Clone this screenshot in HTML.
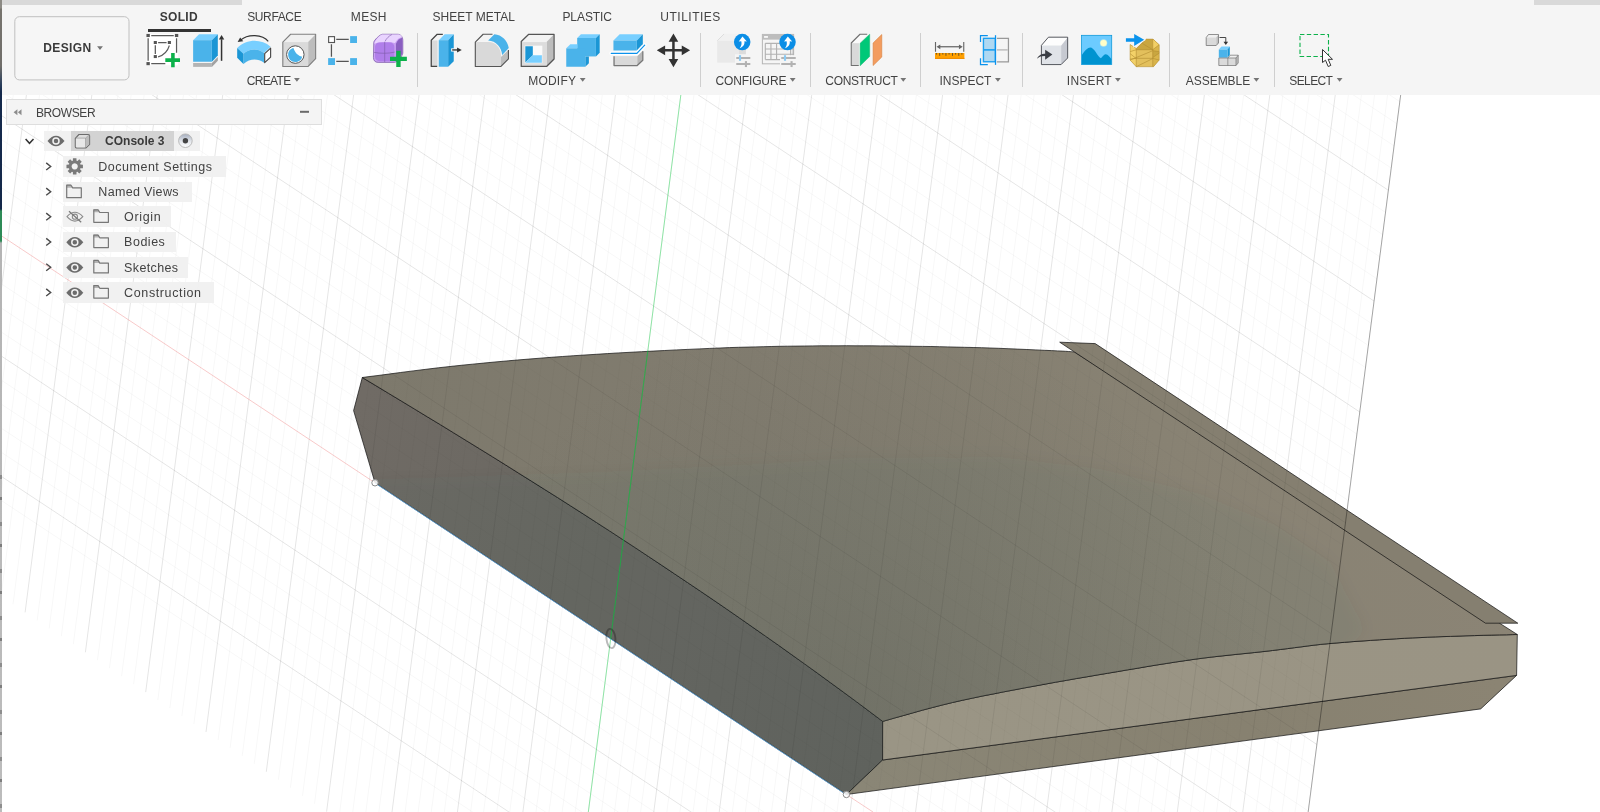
<!DOCTYPE html>
<html lang="en"><head><meta charset="utf-8"><title>Fusion - COnsole 3</title>
<style>
html,body{margin:0;padding:0}
body{width:1600px;height:812px;overflow:hidden;background:#fff;position:relative;font-family:"Liberation Sans",sans-serif;color:#3a3a3a}
.abs{position:absolute}
#labels{position:absolute;left:0;top:0;width:1600px;height:320px;will-change:transform;pointer-events:none}
.t{position:absolute;white-space:pre;color:#424242}
.t.b{font-weight:700;color:#3a3a3a}
#toolbar{position:absolute;left:2px;top:0;width:1598px;height:95px;background:#f5f5f5}
.sep{position:absolute;top:33px;width:1px;height:54px;background:#cfcfcf}
.dd{position:absolute;width:0;height:0;margin-left:-0.7px;border-left:2.9px solid transparent;border-right:2.9px solid transparent;border-top:3.7px solid #707070}
.row{position:absolute;height:20.4px;background:rgba(240,240,240,0.93)}

</style></head>
<body>
<svg id="canvas" width="1600" height="812" viewBox="0 0 1600 812" style="position:absolute;left:0;top:0">
<defs>
<linearGradient id="gTop" gradientUnits="userSpaceOnUse" x1="360" y1="500" x2="1500" y2="420">
<stop offset="0" stop-color="#7d796c"/><stop offset="0.35" stop-color="#817c6f"/><stop offset="0.7" stop-color="#888273"/><stop offset="1" stop-color="#8b8475"/></linearGradient>
<radialGradient id="gDark" gradientUnits="userSpaceOnUse" cx="850" cy="740" r="430">
<stop offset="0" stop-color="#50564f" stop-opacity="0.27"/><stop offset="0.5" stop-color="#50564f" stop-opacity="0.12"/><stop offset="1" stop-color="#50564f" stop-opacity="0"/></radialGradient>
<linearGradient id="gSide" gradientUnits="userSpaceOnUse" x1="360" y1="400" x2="880" y2="760">
<stop offset="0" stop-color="#706b65"/><stop offset="0.45" stop-color="#696761"/><stop offset="1" stop-color="#63635d"/></linearGradient>
<filter id="blur8" x="-10%" y="-10%" width="120%" height="120%"><feGaussianBlur stdDeviation="7"/></filter>
<clipPath id="clipTS"><path d="M362.3,377.5 L369.1,376.6 L378.0,375.5 L388.7,374.1 L400.5,372.5 L413.1,370.9 L425.9,369.3 L438.3,367.8 L450.0,366.5 L461.1,365.3 L472.3,364.2 L483.6,363.1 L494.9,362.0 L506.1,361.0 L517.4,360.0 L528.7,359.1 L540.0,358.2 L551.2,357.3 L562.5,356.5 L573.8,355.7 L585.0,355.0 L596.2,354.3 L607.5,353.6 L618.8,352.9 L630.0,352.3 L641.4,351.7 L653.0,351.1 L664.7,350.5 L676.4,349.9 L687.9,349.4 L699.1,348.9 L709.8,348.4 L720.0,348.0 L729.5,347.6 L738.5,347.3 L747.0,347.1 L755.2,346.9 L763.2,346.7 L771.2,346.5 L779.2,346.3 L787.5,346.2 L795.9,346.1 L804.4,346.0 L812.8,345.9 L821.2,345.8 L829.7,345.8 L838.1,345.8 L846.6,345.7 L855.0,345.8 L863.4,345.8 L871.9,345.8 L880.3,345.9 L888.8,345.9 L897.2,346.0 L905.6,346.1 L914.1,346.3 L922.5,346.4 L930.9,346.5 L939.4,346.7 L947.8,346.9 L956.2,347.1 L964.7,347.3 L973.1,347.5 L981.6,347.7 L990.0,348.0 L998.8,348.3 L1008.1,348.7 L1017.5,349.1 L1026.9,349.5 L1035.9,349.9 L1044.2,350.3 L1051.5,350.6 L1057.5,350.9 L1062.2,351.1 L1065.7,351.3 L1068.3,351.5 L1070.2,351.6 L1071.6,351.7 L1072.6,351.8 L1073.5,351.9 L1074.5,352.0 L1517.3,634.5 L1512.8,634.6 L1506.7,634.8 L1499.6,634.9 L1491.6,635.1 L1483.1,635.3 L1474.5,635.6 L1466.0,635.8 L1458.1,636.1 L1450.5,636.4 L1443.0,636.6 L1435.4,636.9 L1427.8,637.2 L1420.1,637.6 L1412.3,637.9 L1404.3,638.3 L1396.3,638.8 L1388.0,639.3 L1379.4,639.8 L1370.7,640.4 L1361.9,641.0 L1353.1,641.6 L1344.5,642.3 L1336.2,643.0 L1328.2,643.7 L1320.8,644.4 L1313.9,645.2 L1307.4,646.0 L1300.9,646.9 L1294.4,647.7 L1287.7,648.6 L1280.4,649.5 L1272.5,650.5 L1263.9,651.5 L1254.7,652.5 L1245.0,653.5 L1235.1,654.5 L1225.0,655.6 L1214.9,656.7 L1204.8,657.9 L1195.0,659.2 L1185.3,660.6 L1175.7,662.0 L1166.2,663.5 L1156.6,665.0 L1146.9,666.6 L1137.2,668.3 L1127.4,669.9 L1117.5,671.6 L1107.4,673.3 L1097.2,675.0 L1086.9,676.8 L1076.6,678.5 L1066.2,680.4 L1055.7,682.2 L1045.3,684.1 L1035.0,686.0 L1024.6,687.9 L1014.1,689.9 L1003.5,691.9 L993.0,694.0 L982.5,696.0 L972.2,698.2 L962.2,700.3 L952.5,702.5 L942.7,704.9 L932.5,707.5 L922.3,710.2 L912.4,713.0 L903.2,715.6 L894.9,717.9 L888.0,719.9 L882.7,721.4 L869.7,711.6 L856.7,701.9 L843.7,692.3 L830.7,682.8 L817.7,673.3 L804.6,663.9 L791.6,654.6 L778.6,645.3 L765.6,636.2 L752.6,627.1 L739.6,618.0 L726.6,609.0 L713.6,600.1 L700.6,591.3 L687.5,582.5 L674.5,573.8 L661.5,565.1 L648.5,556.5 L635.5,547.9 L622.5,539.4 L609.5,530.9 L596.5,522.5 L583.5,514.1 L570.5,505.8 L557.5,497.5 L544.4,489.3 L531.4,481.1 L518.4,473.0 L505.4,464.8 L492.4,456.7 L479.4,448.7 L466.4,440.7 L453.4,432.7 L440.4,424.7 L427.3,416.8 L414.3,408.9 L401.3,401.0 L388.3,393.2 L375.3,385.3 L362.3,377.5Z"/><path d="M362.3,377.5 L353.6,410.6 L375.0,482.8 L846.4,794.5 L882.6,760.0 L882.7,721.4 L869.7,711.6 L856.7,701.9 L843.7,692.3 L830.7,682.8 L817.7,673.3 L804.6,663.9 L791.6,654.6 L778.6,645.3 L765.6,636.2 L752.6,627.1 L739.6,618.0 L726.6,609.0 L713.6,600.1 L700.6,591.3 L687.5,582.5 L674.5,573.8 L661.5,565.1 L648.5,556.5 L635.5,547.9 L622.5,539.4 L609.5,530.9 L596.5,522.5 L583.5,514.1 L570.5,505.8 L557.5,497.5 L544.4,489.3 L531.4,481.1 L518.4,473.0 L505.4,464.8 L492.4,456.7 L479.4,448.7 L466.4,440.7 L453.4,432.7 L440.4,424.7 L427.3,416.8 L414.3,408.9 L401.3,401.0 L388.3,393.2 L375.3,385.3 L362.3,377.5Z"/></clipPath>
<clipPath id="bodyclip"><path d="M362.3,377.5 L369.1,376.6 L378.0,375.5 L388.7,374.1 L400.5,372.5 L413.1,370.9 L425.9,369.3 L438.3,367.8 L450.0,366.5 L461.1,365.3 L472.3,364.2 L483.6,363.1 L494.9,362.0 L506.1,361.0 L517.4,360.0 L528.7,359.1 L540.0,358.2 L551.2,357.3 L562.5,356.5 L573.8,355.7 L585.0,355.0 L596.2,354.3 L607.5,353.6 L618.8,352.9 L630.0,352.3 L641.4,351.7 L653.0,351.1 L664.7,350.5 L676.4,349.9 L687.9,349.4 L699.1,348.9 L709.8,348.4 L720.0,348.0 L729.5,347.6 L738.5,347.3 L747.0,347.1 L755.2,346.9 L763.2,346.7 L771.2,346.5 L779.2,346.3 L787.5,346.2 L795.9,346.1 L804.4,346.0 L812.8,345.9 L821.2,345.8 L829.7,345.8 L838.1,345.8 L846.6,345.7 L855.0,345.8 L863.4,345.8 L871.9,345.8 L880.3,345.9 L888.8,345.9 L897.2,346.0 L905.6,346.1 L914.1,346.3 L922.5,346.4 L930.9,346.5 L939.4,346.7 L947.8,346.9 L956.2,347.1 L964.7,347.3 L973.1,347.5 L981.6,347.7 L990.0,348.0 L998.8,348.3 L1008.1,348.7 L1017.5,349.1 L1026.9,349.5 L1035.9,349.9 L1044.2,350.3 L1051.5,350.6 L1057.5,350.9 L1062.2,351.1 L1065.7,351.3 L1068.3,351.5 L1070.2,351.6 L1071.6,351.7 L1072.6,351.8 L1073.5,351.9 L1074.5,352.0 L1517.3,634.5 L1512.8,634.6 L1506.7,634.8 L1499.6,634.9 L1491.6,635.1 L1483.1,635.3 L1474.5,635.6 L1466.0,635.8 L1458.1,636.1 L1450.5,636.4 L1443.0,636.6 L1435.4,636.9 L1427.8,637.2 L1420.1,637.6 L1412.3,637.9 L1404.3,638.3 L1396.3,638.8 L1388.0,639.3 L1379.4,639.8 L1370.7,640.4 L1361.9,641.0 L1353.1,641.6 L1344.5,642.3 L1336.2,643.0 L1328.2,643.7 L1320.8,644.4 L1313.9,645.2 L1307.4,646.0 L1300.9,646.9 L1294.4,647.7 L1287.7,648.6 L1280.4,649.5 L1272.5,650.5 L1263.9,651.5 L1254.7,652.5 L1245.0,653.5 L1235.1,654.5 L1225.0,655.6 L1214.9,656.7 L1204.8,657.9 L1195.0,659.2 L1185.3,660.6 L1175.7,662.0 L1166.2,663.5 L1156.6,665.0 L1146.9,666.6 L1137.2,668.3 L1127.4,669.9 L1117.5,671.6 L1107.4,673.3 L1097.2,675.0 L1086.9,676.8 L1076.6,678.5 L1066.2,680.4 L1055.7,682.2 L1045.3,684.1 L1035.0,686.0 L1024.6,687.9 L1014.1,689.9 L1003.5,691.9 L993.0,694.0 L982.5,696.0 L972.2,698.2 L962.2,700.3 L952.5,702.5 L942.7,704.9 L932.5,707.5 L922.3,710.2 L912.4,713.0 L903.2,715.6 L894.9,717.9 L888.0,719.9 L882.7,721.4 L869.7,711.6 L856.7,701.9 L843.7,692.3 L830.7,682.8 L817.7,673.3 L804.6,663.9 L791.6,654.6 L778.6,645.3 L765.6,636.2 L752.6,627.1 L739.6,618.0 L726.6,609.0 L713.6,600.1 L700.6,591.3 L687.5,582.5 L674.5,573.8 L661.5,565.1 L648.5,556.5 L635.5,547.9 L622.5,539.4 L609.5,530.9 L596.5,522.5 L583.5,514.1 L570.5,505.8 L557.5,497.5 L544.4,489.3 L531.4,481.1 L518.4,473.0 L505.4,464.8 L492.4,456.7 L479.4,448.7 L466.4,440.7 L453.4,432.7 L440.4,424.7 L427.3,416.8 L414.3,408.9 L401.3,401.0 L388.3,393.2 L375.3,385.3 L362.3,377.5Z"/><path d="M362.3,377.5 L353.6,410.6 L375.0,482.8 L846.4,794.5 L882.6,760.0 L882.7,721.4 L869.7,711.6 L856.7,701.9 L843.7,692.3 L830.7,682.8 L817.7,673.3 L804.6,663.9 L791.6,654.6 L778.6,645.3 L765.6,636.2 L752.6,627.1 L739.6,618.0 L726.6,609.0 L713.6,600.1 L700.6,591.3 L687.5,582.5 L674.5,573.8 L661.5,565.1 L648.5,556.5 L635.5,547.9 L622.5,539.4 L609.5,530.9 L596.5,522.5 L583.5,514.1 L570.5,505.8 L557.5,497.5 L544.4,489.3 L531.4,481.1 L518.4,473.0 L505.4,464.8 L492.4,456.7 L479.4,448.7 L466.4,440.7 L453.4,432.7 L440.4,424.7 L427.3,416.8 L414.3,408.9 L401.3,401.0 L388.3,393.2 L375.3,385.3 L362.3,377.5Z"/><path d="M882.7,721.4 L888.0,719.9 L894.9,717.9 L903.2,715.6 L912.4,713.0 L922.3,710.2 L932.5,707.5 L942.7,704.9 L952.5,702.5 L962.2,700.3 L972.2,698.2 L982.5,696.0 L993.0,694.0 L1003.5,691.9 L1014.1,689.9 L1024.6,687.9 L1035.0,686.0 L1045.3,684.1 L1055.7,682.2 L1066.2,680.4 L1076.6,678.5 L1086.9,676.8 L1097.2,675.0 L1107.4,673.3 L1117.5,671.6 L1127.4,669.9 L1137.2,668.3 L1146.9,666.6 L1156.6,665.0 L1166.2,663.5 L1175.7,662.0 L1185.3,660.6 L1195.0,659.2 L1204.8,657.9 L1214.9,656.7 L1225.0,655.6 L1235.1,654.5 L1245.0,653.5 L1254.7,652.5 L1263.9,651.5 L1272.5,650.5 L1280.4,649.5 L1287.7,648.6 L1294.4,647.7 L1300.9,646.9 L1307.4,646.0 L1313.9,645.2 L1320.8,644.4 L1328.2,643.7 L1336.2,643.0 L1344.5,642.3 L1353.1,641.6 L1361.9,641.0 L1370.7,640.4 L1379.4,639.8 L1388.0,639.3 L1396.3,638.8 L1404.3,638.3 L1412.3,637.9 L1420.1,637.6 L1427.8,637.2 L1435.4,636.9 L1443.0,636.6 L1450.5,636.4 L1458.1,636.1 L1466.0,635.8 L1474.5,635.6 L1483.1,635.3 L1491.6,635.1 L1499.6,634.9 L1506.7,634.8 L1512.8,634.6 L1517.3,634.5 L1516.6,675.4 L882.6,760.0Z"/><path d="M882.6,760.0 L1516.6,675.4 L1480.7,708.9 L846.4,794.5Z"/><path d="M1059.7,342.2 L1095.2,343.6 L1517.8,623.2 L1485.5,623.2 L1074.5,352.0Z"/></clipPath>
<linearGradient id="gFront" gradientUnits="userSpaceOnUse" x1="880" y1="740" x2="1517" y2="650">
<stop offset="0" stop-color="#9a9585"/><stop offset="1" stop-color="#9a9484"/></linearGradient>
<linearGradient id="gCham" gradientUnits="userSpaceOnUse" x1="860" y1="780" x2="1500" y2="690">
<stop offset="0" stop-color="#8a8676"/><stop offset="0.6" stop-color="#878170"/><stop offset="1" stop-color="#8b8473"/></linearGradient>
<clipPath id="gridclip"><path d="M87.3,-1391.6 L1474.2,-474.8 L1188.2,1742.2 L-198.7,825.4Z"/></clipPath>
</defs>
<rect width="1600" height="812" fill="#fff"/>
<g clip-path="url(#gridclip)" fill="none">
<path d="M99.4,-1383.6 L-143.7,500.8 M111.4,-1375.7 L-131.7,508.8 M123.5,-1367.7 L-119.6,516.7 M135.5,-1359.7 L-107.6,524.7 M159.7,-1343.8 L-83.4,540.7 M171.7,-1335.8 L-71.4,548.6 M183.8,-1327.8 L-59.3,556.6 M195.8,-1319.9 L-47.3,564.6 M220.0,-1303.9 L-23.1,580.5 M232.0,-1296.0 L-11.1,588.5 M244.1,-1288.0 L1.0,596.5 M256.1,-1280.0 L13.0,604.4 M280.3,-1264.1 L37.2,620.4 M292.3,-1256.1 L49.2,628.4 M304.4,-1248.1 L61.3,636.3 M316.4,-1240.2 L73.3,644.3 M340.6,-1224.2 L97.5,660.2 M352.6,-1216.2 L109.5,668.2 M364.7,-1208.3 L121.6,676.2 M376.7,-1200.3 L133.6,684.2 M400.9,-1184.3 L157.8,700.1 M412.9,-1176.4 L169.8,708.1 M425.0,-1168.4 L181.9,716.0 M437.0,-1160.4 L193.9,724.0 M461.2,-1144.5 L218.1,740.0 M473.2,-1136.5 L230.1,747.9 M485.3,-1128.5 L242.2,755.9 M497.3,-1120.6 L254.2,763.9 M521.5,-1104.6 L278.4,779.8 M533.5,-1096.7 L290.4,787.8 M545.6,-1088.7 L302.5,795.8 M557.6,-1080.7 L314.5,803.7 M581.8,-1064.8 L338.7,819.7 M593.8,-1056.8 L350.7,827.7 M605.9,-1048.8 L362.8,835.6 M617.9,-1040.9 L374.8,843.6 M642.1,-1024.9 L399.0,859.5 M654.1,-1016.9 L411.0,867.5 M666.2,-1009.0 L423.1,875.5 M678.2,-1001.0 L435.1,883.5 M702.4,-985.0 L459.3,899.4 M714.4,-977.1 L471.3,907.4 M726.5,-969.1 L483.4,915.3 M738.5,-961.1 L495.4,923.3 M762.7,-945.2 L519.6,939.3 M774.7,-937.2 L531.6,947.2 M786.8,-929.2 L543.7,955.2 M798.8,-921.3 L555.7,963.2 M823.0,-905.3 L579.9,979.1 M835.0,-897.4 L591.9,987.1 M847.1,-889.4 L604.0,995.1 M859.1,-881.4 L616.0,1003.0 M883.3,-865.5 L640.2,1019.0 M895.3,-857.5 L652.2,1027.0 M907.4,-849.5 L664.3,1034.9 M919.4,-841.6 L676.3,1042.9 M943.6,-825.6 L700.5,1058.8 M955.6,-817.6 L712.5,1066.8 M967.7,-809.7 L724.6,1074.8 M979.7,-801.7 L736.6,1082.8 M1003.9,-785.7 L760.8,1098.7 M1015.9,-777.8 L772.8,1106.7 M1028.0,-769.8 L784.9,1114.6 M1040.0,-761.8 L796.9,1122.6 M1064.2,-745.9 L821.1,1138.6 M1076.2,-737.9 L833.1,1146.5 M1088.3,-729.9 L845.2,1154.5 M1100.3,-722.0 L857.2,1162.5 M1124.5,-706.0 L881.4,1178.4 M1136.5,-698.1 L893.4,1186.4 M1148.6,-690.1 L905.5,1194.4 M1160.6,-682.1 L917.5,1202.3 M1184.8,-666.2 L941.7,1218.3 M1196.8,-658.2 L953.7,1226.3 M1208.9,-650.2 L965.8,1234.2 M1220.9,-642.3 L977.8,1242.2 M1245.1,-626.3 L1002.0,1258.1 M1257.1,-618.3 L1014.0,1266.1 M1269.2,-610.4 L1026.1,1274.1 M1281.2,-602.4 L1038.1,1282.1 M1305.4,-586.4 L1062.3,1298.0 M1317.4,-578.5 L1074.3,1306.0 M1329.5,-570.5 L1086.4,1313.9 M1341.5,-562.5 L1098.4,1321.9 M1365.7,-546.6 L1122.6,1337.9 M1377.7,-538.6 L1134.6,1345.8 M1389.8,-530.6 L1146.7,1353.8 M1401.8,-522.7 L1158.7,1361.8 M1426.0,-506.7 L1182.9,1377.7 M1438.0,-498.8 L1194.9,1385.7 M1450.1,-490.8 L1207.0,1393.7 M1462.1,-482.8 L1219.0,1401.6 M84.4,-1369.5 L1471.3,-452.7 M81.6,-1347.3 L1468.5,-430.5 M78.7,-1325.1 L1465.6,-408.3 M75.9,-1302.9 L1462.8,-386.2 M70.1,-1258.6 L1457.0,-341.8 M67.3,-1236.4 L1454.2,-319.6 M64.4,-1214.3 L1451.3,-297.5 M61.6,-1192.1 L1448.5,-275.3 M55.8,-1147.8 L1442.7,-231.0 M53.0,-1125.6 L1439.9,-208.8 M50.1,-1103.4 L1437.0,-186.6 M47.3,-1081.2 L1434.2,-164.5 M41.5,-1036.9 L1428.4,-120.1 M38.7,-1014.7 L1425.6,-98.0 M35.8,-992.6 L1422.7,-75.8 M33.0,-970.4 L1419.9,-53.6 M27.2,-926.0 L1414.1,-9.3 M24.4,-903.9 L1411.3,12.9 M21.5,-881.7 L1408.4,35.1 M18.7,-859.5 L1405.6,57.2 M12.9,-815.2 L1399.8,101.6 M10.1,-793.0 L1397.0,123.8 M7.2,-770.9 L1394.1,145.9 M4.4,-748.7 L1391.3,168.1 M-1.4,-704.3 L1385.5,212.4 M-4.2,-682.2 L1382.7,234.6 M-7.1,-660.0 L1379.8,256.8 M-9.9,-637.8 L1377.0,278.9 M-15.7,-593.5 L1371.2,323.3 M-18.5,-571.3 L1368.4,345.5 M-21.4,-549.2 L1365.5,367.6 M-24.2,-527.0 L1362.7,389.8 M-30.0,-482.6 L1356.9,434.1 M-32.8,-460.5 L1354.1,456.3 M-35.7,-438.3 L1351.2,478.5 M-38.5,-416.1 L1348.4,500.6 M-44.3,-371.8 L1342.6,545.0 M-47.1,-349.6 L1339.8,567.2 M-50.0,-327.5 L1336.9,589.3 M-52.8,-305.3 L1334.1,611.5 M-58.6,-260.9 L1328.3,655.8 M-61.4,-238.8 L1325.5,678.0 M-64.3,-216.6 L1322.6,700.2 M-67.1,-194.4 L1319.8,722.3 M-72.9,-150.1 L1314.0,766.7 M-75.7,-127.9 L1311.2,788.8 M-78.6,-105.8 L1308.3,811.0 M-81.4,-83.6 L1305.5,833.2 M-87.2,-39.2 L1299.7,877.5 M-90.0,-17.1 L1296.9,899.7 M-92.9,5.1 L1294.0,921.9 M-95.7,27.3 L1291.2,944.0 M-101.5,71.6 L1285.4,988.4 M-104.3,93.8 L1282.6,1010.5 M-107.2,115.9 L1279.7,1032.7 M-110.0,138.1 L1276.9,1054.9 M-115.8,182.5 L1271.1,1099.2 M-118.6,204.6 L1268.3,1121.4 M-121.5,226.8 L1265.4,1143.6 M-124.3,249.0 L1262.6,1165.7 M-130.1,293.3 L1256.8,1210.1 M-132.9,315.5 L1254.0,1232.2 M-135.8,337.6 L1251.1,1254.4 M-138.6,359.8 L1248.3,1276.6 M-144.4,404.2 L1242.5,1320.9" stroke="#000" stroke-opacity="0.032" stroke-width="1"/>
<path d="M87.3,-1391.6 L-155.8,492.8 M147.6,-1351.8 L-95.5,532.7 M207.9,-1311.9 L-35.2,572.5 M268.2,-1272.0 L25.1,612.4 M328.5,-1232.2 L85.4,652.3 M388.8,-1192.3 L145.7,692.1 M449.1,-1152.5 L206.0,732.0 M509.4,-1112.6 L266.3,771.8 M569.7,-1072.7 L326.6,811.7 M630.0,-1032.9 L386.9,851.6 M690.3,-993.0 L447.2,891.4 M750.6,-953.2 L507.5,931.3 M810.9,-913.3 L567.8,971.1 M871.2,-873.4 L628.1,1011.0 M931.5,-833.6 L688.4,1050.9 M991.8,-793.7 L748.7,1090.7 M1052.1,-753.9 L809.0,1130.6 M1112.4,-714.0 L869.3,1170.5 M1172.7,-674.1 L929.6,1210.3 M1233.0,-634.3 L989.9,1250.2 M1293.3,-594.4 L1050.2,1290.0 M1353.6,-554.6 L1110.5,1329.9 M1413.9,-514.7 L1170.8,1369.8 M1474.2,-474.8 L1231.1,1409.6 M87.3,-1391.6 L1474.2,-474.8 M73.0,-1280.8 L1459.9,-364.0 M58.7,-1169.9 L1445.6,-253.1 M44.4,-1059.1 L1431.3,-142.3 M30.1,-948.2 L1417.0,-31.4 M15.8,-837.4 L1402.7,79.4 M1.5,-726.5 L1388.4,190.3 M-12.8,-615.7 L1374.1,301.1 M-27.1,-504.8 L1359.8,412.0 M-41.4,-394.0 L1345.5,522.8 M-55.7,-283.1 L1331.2,633.7 M-70.0,-172.3 L1316.9,744.5 M-84.3,-61.4 L1302.6,855.4 M-98.6,49.4 L1288.3,966.2 M-127.2,271.1 L1259.7,1187.9 M-141.5,382.0 L1245.4,1298.8" stroke="#000" stroke-opacity="0.1" stroke-width="1"/>
</g>
<path d="M362.3,377.5 L353.6,410.6 L375.0,482.8 L846.4,794.5 L882.6,760.0 L882.7,721.4 L869.7,711.6 L856.7,701.9 L843.7,692.3 L830.7,682.8 L817.7,673.3 L804.6,663.9 L791.6,654.6 L778.6,645.3 L765.6,636.2 L752.6,627.1 L739.6,618.0 L726.6,609.0 L713.6,600.1 L700.6,591.3 L687.5,582.5 L674.5,573.8 L661.5,565.1 L648.5,556.5 L635.5,547.9 L622.5,539.4 L609.5,530.9 L596.5,522.5 L583.5,514.1 L570.5,505.8 L557.5,497.5 L544.4,489.3 L531.4,481.1 L518.4,473.0 L505.4,464.8 L492.4,456.7 L479.4,448.7 L466.4,440.7 L453.4,432.7 L440.4,424.7 L427.3,416.8 L414.3,408.9 L401.3,401.0 L388.3,393.2 L375.3,385.3 L362.3,377.5Z" fill="url(#gSide)" stroke="#141414" stroke-width="0.72" stroke-linejoin="round"/>
<path d="M882.6,760.0 L1516.6,675.4 L1480.7,708.9 L846.4,794.5Z" fill="url(#gCham)" stroke="#141414" stroke-width="0.72" stroke-linejoin="round"/>
<path d="M882.7,721.4 L888.0,719.9 L894.9,717.9 L903.2,715.6 L912.4,713.0 L922.3,710.2 L932.5,707.5 L942.7,704.9 L952.5,702.5 L962.2,700.3 L972.2,698.2 L982.5,696.0 L993.0,694.0 L1003.5,691.9 L1014.1,689.9 L1024.6,687.9 L1035.0,686.0 L1045.3,684.1 L1055.7,682.2 L1066.2,680.4 L1076.6,678.5 L1086.9,676.8 L1097.2,675.0 L1107.4,673.3 L1117.5,671.6 L1127.4,669.9 L1137.2,668.3 L1146.9,666.6 L1156.6,665.0 L1166.2,663.5 L1175.7,662.0 L1185.3,660.6 L1195.0,659.2 L1204.8,657.9 L1214.9,656.7 L1225.0,655.6 L1235.1,654.5 L1245.0,653.5 L1254.7,652.5 L1263.9,651.5 L1272.5,650.5 L1280.4,649.5 L1287.7,648.6 L1294.4,647.7 L1300.9,646.9 L1307.4,646.0 L1313.9,645.2 L1320.8,644.4 L1328.2,643.7 L1336.2,643.0 L1344.5,642.3 L1353.1,641.6 L1361.9,641.0 L1370.7,640.4 L1379.4,639.8 L1388.0,639.3 L1396.3,638.8 L1404.3,638.3 L1412.3,637.9 L1420.1,637.6 L1427.8,637.2 L1435.4,636.9 L1443.0,636.6 L1450.5,636.4 L1458.1,636.1 L1466.0,635.8 L1474.5,635.6 L1483.1,635.3 L1491.6,635.1 L1499.6,634.9 L1506.7,634.8 L1512.8,634.6 L1517.3,634.5 L1516.6,675.4 L882.6,760.0Z" fill="url(#gFront)" stroke="#141414" stroke-width="0.72" stroke-linejoin="round"/>
<path d="M362.3,377.5 L369.1,376.6 L378.0,375.5 L388.7,374.1 L400.5,372.5 L413.1,370.9 L425.9,369.3 L438.3,367.8 L450.0,366.5 L461.1,365.3 L472.3,364.2 L483.6,363.1 L494.9,362.0 L506.1,361.0 L517.4,360.0 L528.7,359.1 L540.0,358.2 L551.2,357.3 L562.5,356.5 L573.8,355.7 L585.0,355.0 L596.2,354.3 L607.5,353.6 L618.8,352.9 L630.0,352.3 L641.4,351.7 L653.0,351.1 L664.7,350.5 L676.4,349.9 L687.9,349.4 L699.1,348.9 L709.8,348.4 L720.0,348.0 L729.5,347.6 L738.5,347.3 L747.0,347.1 L755.2,346.9 L763.2,346.7 L771.2,346.5 L779.2,346.3 L787.5,346.2 L795.9,346.1 L804.4,346.0 L812.8,345.9 L821.2,345.8 L829.7,345.8 L838.1,345.8 L846.6,345.7 L855.0,345.8 L863.4,345.8 L871.9,345.8 L880.3,345.9 L888.8,345.9 L897.2,346.0 L905.6,346.1 L914.1,346.3 L922.5,346.4 L930.9,346.5 L939.4,346.7 L947.8,346.9 L956.2,347.1 L964.7,347.3 L973.1,347.5 L981.6,347.7 L990.0,348.0 L998.8,348.3 L1008.1,348.7 L1017.5,349.1 L1026.9,349.5 L1035.9,349.9 L1044.2,350.3 L1051.5,350.6 L1057.5,350.9 L1062.2,351.1 L1065.7,351.3 L1068.3,351.5 L1070.2,351.6 L1071.6,351.7 L1072.6,351.8 L1073.5,351.9 L1074.5,352.0 L1517.3,634.5 L1512.8,634.6 L1506.7,634.8 L1499.6,634.9 L1491.6,635.1 L1483.1,635.3 L1474.5,635.6 L1466.0,635.8 L1458.1,636.1 L1450.5,636.4 L1443.0,636.6 L1435.4,636.9 L1427.8,637.2 L1420.1,637.6 L1412.3,637.9 L1404.3,638.3 L1396.3,638.8 L1388.0,639.3 L1379.4,639.8 L1370.7,640.4 L1361.9,641.0 L1353.1,641.6 L1344.5,642.3 L1336.2,643.0 L1328.2,643.7 L1320.8,644.4 L1313.9,645.2 L1307.4,646.0 L1300.9,646.9 L1294.4,647.7 L1287.7,648.6 L1280.4,649.5 L1272.5,650.5 L1263.9,651.5 L1254.7,652.5 L1245.0,653.5 L1235.1,654.5 L1225.0,655.6 L1214.9,656.7 L1204.8,657.9 L1195.0,659.2 L1185.3,660.6 L1175.7,662.0 L1166.2,663.5 L1156.6,665.0 L1146.9,666.6 L1137.2,668.3 L1127.4,669.9 L1117.5,671.6 L1107.4,673.3 L1097.2,675.0 L1086.9,676.8 L1076.6,678.5 L1066.2,680.4 L1055.7,682.2 L1045.3,684.1 L1035.0,686.0 L1024.6,687.9 L1014.1,689.9 L1003.5,691.9 L993.0,694.0 L982.5,696.0 L972.2,698.2 L962.2,700.3 L952.5,702.5 L942.7,704.9 L932.5,707.5 L922.3,710.2 L912.4,713.0 L903.2,715.6 L894.9,717.9 L888.0,719.9 L882.7,721.4 L869.7,711.6 L856.7,701.9 L843.7,692.3 L830.7,682.8 L817.7,673.3 L804.6,663.9 L791.6,654.6 L778.6,645.3 L765.6,636.2 L752.6,627.1 L739.6,618.0 L726.6,609.0 L713.6,600.1 L700.6,591.3 L687.5,582.5 L674.5,573.8 L661.5,565.1 L648.5,556.5 L635.5,547.9 L622.5,539.4 L609.5,530.9 L596.5,522.5 L583.5,514.1 L570.5,505.8 L557.5,497.5 L544.4,489.3 L531.4,481.1 L518.4,473.0 L505.4,464.8 L492.4,456.7 L479.4,448.7 L466.4,440.7 L453.4,432.7 L440.4,424.7 L427.3,416.8 L414.3,408.9 L401.3,401.0 L388.3,393.2 L375.3,385.3 L362.3,377.5Z" fill="url(#gTop)" stroke="#141414" stroke-width="0.72" stroke-linejoin="round"/>
<path d="M1059.7,342.2 L1095.2,343.6 L1517.8,623.2 L1485.5,623.2 L1074.5,352.0Z" fill="#857f70" stroke="#141414" stroke-width="0.72" stroke-linejoin="round"/>
<g clip-path="url(#clipTS)"><path d="M300,481 L420,478 L600,472 L760,464 L850,458 L1000,457 L1100,469 L1200,494 L1275,525 L1330,562 L1365,630 L1300,700 L1000,840 L300,840Z" fill="#1e645a" fill-opacity="0.045" filter="url(#blur8)"/></g>
<path d="M362.3,377.5 L369.1,376.6 L378.0,375.5 L388.7,374.1 L400.5,372.5 L413.1,370.9 L425.9,369.3 L438.3,367.8 L450.0,366.5 L461.1,365.3 L472.3,364.2 L483.6,363.1 L494.9,362.0 L506.1,361.0 L517.4,360.0 L528.7,359.1 L540.0,358.2 L551.2,357.3 L562.5,356.5 L573.8,355.7 L585.0,355.0 L596.2,354.3 L607.5,353.6 L618.8,352.9 L630.0,352.3 L641.4,351.7 L653.0,351.1 L664.7,350.5 L676.4,349.9 L687.9,349.4 L699.1,348.9 L709.8,348.4 L720.0,348.0 L729.5,347.6 L738.5,347.3 L747.0,347.1 L755.2,346.9 L763.2,346.7 L771.2,346.5 L779.2,346.3 L787.5,346.2 L795.9,346.1 L804.4,346.0 L812.8,345.9 L821.2,345.8 L829.7,345.8 L838.1,345.8 L846.6,345.7 L855.0,345.8 L863.4,345.8 L871.9,345.8 L880.3,345.9 L888.8,345.9 L897.2,346.0 L905.6,346.1 L914.1,346.3 L922.5,346.4 L930.9,346.5 L939.4,346.7 L947.8,346.9 L956.2,347.1 L964.7,347.3 L973.1,347.5 L981.6,347.7 L990.0,348.0 L998.8,348.3 L1008.1,348.7 L1017.5,349.1 L1026.9,349.5 L1035.9,349.9 L1044.2,350.3 L1051.5,350.6 L1057.5,350.9 L1062.2,351.1 L1065.7,351.3 L1068.3,351.5 L1070.2,351.6 L1071.6,351.7 L1072.6,351.8 L1073.5,351.9 L1074.5,352.0 L1517.3,634.5 L1512.8,634.6 L1506.7,634.8 L1499.6,634.9 L1491.6,635.1 L1483.1,635.3 L1474.5,635.6 L1466.0,635.8 L1458.1,636.1 L1450.5,636.4 L1443.0,636.6 L1435.4,636.9 L1427.8,637.2 L1420.1,637.6 L1412.3,637.9 L1404.3,638.3 L1396.3,638.8 L1388.0,639.3 L1379.4,639.8 L1370.7,640.4 L1361.9,641.0 L1353.1,641.6 L1344.5,642.3 L1336.2,643.0 L1328.2,643.7 L1320.8,644.4 L1313.9,645.2 L1307.4,646.0 L1300.9,646.9 L1294.4,647.7 L1287.7,648.6 L1280.4,649.5 L1272.5,650.5 L1263.9,651.5 L1254.7,652.5 L1245.0,653.5 L1235.1,654.5 L1225.0,655.6 L1214.9,656.7 L1204.8,657.9 L1195.0,659.2 L1185.3,660.6 L1175.7,662.0 L1166.2,663.5 L1156.6,665.0 L1146.9,666.6 L1137.2,668.3 L1127.4,669.9 L1117.5,671.6 L1107.4,673.3 L1097.2,675.0 L1086.9,676.8 L1076.6,678.5 L1066.2,680.4 L1055.7,682.2 L1045.3,684.1 L1035.0,686.0 L1024.6,687.9 L1014.1,689.9 L1003.5,691.9 L993.0,694.0 L982.5,696.0 L972.2,698.2 L962.2,700.3 L952.5,702.5 L942.7,704.9 L932.5,707.5 L922.3,710.2 L912.4,713.0 L903.2,715.6 L894.9,717.9 L888.0,719.9 L882.7,721.4 L869.7,711.6 L856.7,701.9 L843.7,692.3 L830.7,682.8 L817.7,673.3 L804.6,663.9 L791.6,654.6 L778.6,645.3 L765.6,636.2 L752.6,627.1 L739.6,618.0 L726.6,609.0 L713.6,600.1 L700.6,591.3 L687.5,582.5 L674.5,573.8 L661.5,565.1 L648.5,556.5 L635.5,547.9 L622.5,539.4 L609.5,530.9 L596.5,522.5 L583.5,514.1 L570.5,505.8 L557.5,497.5 L544.4,489.3 L531.4,481.1 L518.4,473.0 L505.4,464.8 L492.4,456.7 L479.4,448.7 L466.4,440.7 L453.4,432.7 L440.4,424.7 L427.3,416.8 L414.3,408.9 L401.3,401.0 L388.3,393.2 L375.3,385.3 L362.3,377.5Z" fill="url(#gDark)"/>
<path d="M375.0,482.8 L846.4,794.5" stroke="#5a9fd6" stroke-width="0.85" fill="none" transform="translate(-0.1,0.2)"/>
<path d="M0,234.9 L375.0,482.8 M846.4,794.5 L873.0,812" stroke="#f08a8a" stroke-opacity="0.5" stroke-width="0.9" fill="none"/>
<g clip-path="url(#bodyclip)">
<g clip-path="url(#gridclip)" fill="none">
<path d="M99.4,-1383.6 L-143.7,500.8 M111.4,-1375.7 L-131.7,508.8 M123.5,-1367.7 L-119.6,516.7 M135.5,-1359.7 L-107.6,524.7 M159.7,-1343.8 L-83.4,540.7 M171.7,-1335.8 L-71.4,548.6 M183.8,-1327.8 L-59.3,556.6 M195.8,-1319.9 L-47.3,564.6 M220.0,-1303.9 L-23.1,580.5 M232.0,-1296.0 L-11.1,588.5 M244.1,-1288.0 L1.0,596.5 M256.1,-1280.0 L13.0,604.4 M280.3,-1264.1 L37.2,620.4 M292.3,-1256.1 L49.2,628.4 M304.4,-1248.1 L61.3,636.3 M316.4,-1240.2 L73.3,644.3 M340.6,-1224.2 L97.5,660.2 M352.6,-1216.2 L109.5,668.2 M364.7,-1208.3 L121.6,676.2 M376.7,-1200.3 L133.6,684.2 M400.9,-1184.3 L157.8,700.1 M412.9,-1176.4 L169.8,708.1 M425.0,-1168.4 L181.9,716.0 M437.0,-1160.4 L193.9,724.0 M461.2,-1144.5 L218.1,740.0 M473.2,-1136.5 L230.1,747.9 M485.3,-1128.5 L242.2,755.9 M497.3,-1120.6 L254.2,763.9 M521.5,-1104.6 L278.4,779.8 M533.5,-1096.7 L290.4,787.8 M545.6,-1088.7 L302.5,795.8 M557.6,-1080.7 L314.5,803.7 M581.8,-1064.8 L338.7,819.7 M593.8,-1056.8 L350.7,827.7 M605.9,-1048.8 L362.8,835.6 M617.9,-1040.9 L374.8,843.6 M642.1,-1024.9 L399.0,859.5 M654.1,-1016.9 L411.0,867.5 M666.2,-1009.0 L423.1,875.5 M678.2,-1001.0 L435.1,883.5 M702.4,-985.0 L459.3,899.4 M714.4,-977.1 L471.3,907.4 M726.5,-969.1 L483.4,915.3 M738.5,-961.1 L495.4,923.3 M762.7,-945.2 L519.6,939.3 M774.7,-937.2 L531.6,947.2 M786.8,-929.2 L543.7,955.2 M798.8,-921.3 L555.7,963.2 M823.0,-905.3 L579.9,979.1 M835.0,-897.4 L591.9,987.1 M847.1,-889.4 L604.0,995.1 M859.1,-881.4 L616.0,1003.0 M883.3,-865.5 L640.2,1019.0 M895.3,-857.5 L652.2,1027.0 M907.4,-849.5 L664.3,1034.9 M919.4,-841.6 L676.3,1042.9 M943.6,-825.6 L700.5,1058.8 M955.6,-817.6 L712.5,1066.8 M967.7,-809.7 L724.6,1074.8 M979.7,-801.7 L736.6,1082.8 M1003.9,-785.7 L760.8,1098.7 M1015.9,-777.8 L772.8,1106.7 M1028.0,-769.8 L784.9,1114.6 M1040.0,-761.8 L796.9,1122.6 M1064.2,-745.9 L821.1,1138.6 M1076.2,-737.9 L833.1,1146.5 M1088.3,-729.9 L845.2,1154.5 M1100.3,-722.0 L857.2,1162.5 M1124.5,-706.0 L881.4,1178.4 M1136.5,-698.1 L893.4,1186.4 M1148.6,-690.1 L905.5,1194.4 M1160.6,-682.1 L917.5,1202.3 M1184.8,-666.2 L941.7,1218.3 M1196.8,-658.2 L953.7,1226.3 M1208.9,-650.2 L965.8,1234.2 M1220.9,-642.3 L977.8,1242.2 M1245.1,-626.3 L1002.0,1258.1 M1257.1,-618.3 L1014.0,1266.1 M1269.2,-610.4 L1026.1,1274.1 M1281.2,-602.4 L1038.1,1282.1 M1305.4,-586.4 L1062.3,1298.0 M1317.4,-578.5 L1074.3,1306.0 M1329.5,-570.5 L1086.4,1313.9 M1341.5,-562.5 L1098.4,1321.9 M1365.7,-546.6 L1122.6,1337.9 M1377.7,-538.6 L1134.6,1345.8 M1389.8,-530.6 L1146.7,1353.8 M1401.8,-522.7 L1158.7,1361.8 M1426.0,-506.7 L1182.9,1377.7 M1438.0,-498.8 L1194.9,1385.7 M1450.1,-490.8 L1207.0,1393.7 M1462.1,-482.8 L1219.0,1401.6 M84.4,-1369.5 L1471.3,-452.7 M81.6,-1347.3 L1468.5,-430.5 M78.7,-1325.1 L1465.6,-408.3 M75.9,-1302.9 L1462.8,-386.2 M70.1,-1258.6 L1457.0,-341.8 M67.3,-1236.4 L1454.2,-319.6 M64.4,-1214.3 L1451.3,-297.5 M61.6,-1192.1 L1448.5,-275.3 M55.8,-1147.8 L1442.7,-231.0 M53.0,-1125.6 L1439.9,-208.8 M50.1,-1103.4 L1437.0,-186.6 M47.3,-1081.2 L1434.2,-164.5 M41.5,-1036.9 L1428.4,-120.1 M38.7,-1014.7 L1425.6,-98.0 M35.8,-992.6 L1422.7,-75.8 M33.0,-970.4 L1419.9,-53.6 M27.2,-926.0 L1414.1,-9.3 M24.4,-903.9 L1411.3,12.9 M21.5,-881.7 L1408.4,35.1 M18.7,-859.5 L1405.6,57.2 M12.9,-815.2 L1399.8,101.6 M10.1,-793.0 L1397.0,123.8 M7.2,-770.9 L1394.1,145.9 M4.4,-748.7 L1391.3,168.1 M-1.4,-704.3 L1385.5,212.4 M-4.2,-682.2 L1382.7,234.6 M-7.1,-660.0 L1379.8,256.8 M-9.9,-637.8 L1377.0,278.9 M-15.7,-593.5 L1371.2,323.3 M-18.5,-571.3 L1368.4,345.5 M-21.4,-549.2 L1365.5,367.6 M-24.2,-527.0 L1362.7,389.8 M-30.0,-482.6 L1356.9,434.1 M-32.8,-460.5 L1354.1,456.3 M-35.7,-438.3 L1351.2,478.5 M-38.5,-416.1 L1348.4,500.6 M-44.3,-371.8 L1342.6,545.0 M-47.1,-349.6 L1339.8,567.2 M-50.0,-327.5 L1336.9,589.3 M-52.8,-305.3 L1334.1,611.5 M-58.6,-260.9 L1328.3,655.8 M-61.4,-238.8 L1325.5,678.0 M-64.3,-216.6 L1322.6,700.2 M-67.1,-194.4 L1319.8,722.3 M-72.9,-150.1 L1314.0,766.7 M-75.7,-127.9 L1311.2,788.8 M-78.6,-105.8 L1308.3,811.0 M-81.4,-83.6 L1305.5,833.2 M-87.2,-39.2 L1299.7,877.5 M-90.0,-17.1 L1296.9,899.7 M-92.9,5.1 L1294.0,921.9 M-95.7,27.3 L1291.2,944.0 M-101.5,71.6 L1285.4,988.4 M-104.3,93.8 L1282.6,1010.5 M-107.2,115.9 L1279.7,1032.7 M-110.0,138.1 L1276.9,1054.9 M-115.8,182.5 L1271.1,1099.2 M-118.6,204.6 L1268.3,1121.4 M-121.5,226.8 L1265.4,1143.6 M-124.3,249.0 L1262.6,1165.7 M-130.1,293.3 L1256.8,1210.1 M-132.9,315.5 L1254.0,1232.2 M-135.8,337.6 L1251.1,1254.4 M-138.6,359.8 L1248.3,1276.6 M-144.4,404.2 L1242.5,1320.9" stroke="#000" stroke-opacity="0.018" stroke-width="1"/>
<path d="M87.3,-1391.6 L-155.8,492.8 M147.6,-1351.8 L-95.5,532.7 M207.9,-1311.9 L-35.2,572.5 M268.2,-1272.0 L25.1,612.4 M328.5,-1232.2 L85.4,652.3 M388.8,-1192.3 L145.7,692.1 M449.1,-1152.5 L206.0,732.0 M509.4,-1112.6 L266.3,771.8 M569.7,-1072.7 L326.6,811.7 M630.0,-1032.9 L386.9,851.6 M690.3,-993.0 L447.2,891.4 M750.6,-953.2 L507.5,931.3 M810.9,-913.3 L567.8,971.1 M871.2,-873.4 L628.1,1011.0 M931.5,-833.6 L688.4,1050.9 M991.8,-793.7 L748.7,1090.7 M1052.1,-753.9 L809.0,1130.6 M1112.4,-714.0 L869.3,1170.5 M1172.7,-674.1 L929.6,1210.3 M1233.0,-634.3 L989.9,1250.2 M1293.3,-594.4 L1050.2,1290.0 M1353.6,-554.6 L1110.5,1329.9 M1413.9,-514.7 L1170.8,1369.8 M1474.2,-474.8 L1231.1,1409.6 M87.3,-1391.6 L1474.2,-474.8 M73.0,-1280.8 L1459.9,-364.0 M58.7,-1169.9 L1445.6,-253.1 M44.4,-1059.1 L1431.3,-142.3 M30.1,-948.2 L1417.0,-31.4 M15.8,-837.4 L1402.7,79.4 M1.5,-726.5 L1388.4,190.3 M-12.8,-615.7 L1374.1,301.1 M-27.1,-504.8 L1359.8,412.0 M-41.4,-394.0 L1345.5,522.8 M-55.7,-283.1 L1331.2,633.7 M-70.0,-172.3 L1316.9,744.5 M-84.3,-61.4 L1302.6,855.4 M-98.6,49.4 L1288.3,966.2 M-127.2,271.1 L1259.7,1187.9 M-141.5,382.0 L1245.4,1298.8" stroke="#000" stroke-opacity="0.068" stroke-width="1"/>
</g>
</g>
<path d="M1474.2,-474.8 L1231.1,1409.6" stroke="#000" stroke-opacity="0.36" stroke-width="0.9" fill="none"/>
<path d="M810.9,-913.3 L567.8,971.1" stroke="#00e13c" stroke-opacity="0.42" stroke-width="0.9" fill="none"/>
<g clip-path="url(#bodyclip)"><path d="M810.9,-913.3 L567.8,971.1" stroke="#00c83c" stroke-opacity="0.35" stroke-width="0.9" fill="none"/></g>
<circle cx="375.0" cy="482.8" r="3.2" fill="#fff" fill-opacity="0.85" stroke="#8a8a8a" stroke-width="1"/>
<circle cx="846.4" cy="794.5" r="3.2" fill="#fff" fill-opacity="0.85" stroke="#8a8a8a" stroke-width="1"/>
<ellipse cx="610.9" cy="638.5" rx="4.5" ry="9.7" fill="none" stroke="#000" stroke-opacity="0.27" stroke-width="1.9" transform="rotate(-6 610.9 638.5)"/>
</svg>
<div id="toolbar"></div>
<div class="abs" style="left:0;top:0;width:242px;height:4.6px;background:#d9d9d9"></div>
<div class="abs" style="left:1534px;top:0;width:66px;height:4.6px;background:#d9d9d9"></div>
<div class="abs" style="left:0;top:0;width:1.7px;height:812px;background:linear-gradient(#8c8a84 0,#8c8a84 8px,#77746e 9px,#706e6a 66px,#2b3f5c 84px,#152a4c 92px,#14284a 209px,#2e8b57 211px,#2e8b57 241px,#b4b4b4 243px,#bdbdbd 812px)"></div>
<div class="abs" style="left:0;top:475px;width:1.5px;height:337px;background:repeating-linear-gradient(#555 0,#555 4px,#bbb 4px,#bbb 22px,#333 22px,#333 25px,#bbb 25px,#bbb 47px);opacity:.45"></div>
<div class="abs" style="left:148px;top:29px;width:63px;height:3px;background:#333"></div>
<div class="sep" style="left:417px"></div>
<div class="sep" style="left:700px"></div>
<div class="sep" style="left:810px"></div>
<div class="sep" style="left:920px"></div>
<div class="sep" style="left:1022px"></div>
<div class="sep" style="left:1169px"></div>
<div class="sep" style="left:1274px"></div>

<div class="abs" style="left:6px;top:99px;width:314px;height:23.5px;border:1px solid #dedede;background:#f4f4f4"></div>
<div class="row" style="left:43.8px;top:131px;width:156px"></div>
<div class="abs" style="left:70.7px;top:131px;width:103.2px;height:20.4px;background:#d3d3d3"></div>
<div class="row" style="left:63.2px;top:156.2px;width:162.4px"></div>
<div class="row" style="left:63.2px;top:181.5px;width:128.7px"></div>
<div class="row" style="left:63.1px;top:206.3px;width:108.4px"></div>
<div class="row" style="left:63.1px;top:231.9px;width:112.7px"></div>
<div class="row" style="left:63.1px;top:257.2px;width:125.3px"></div>
<div class="row" style="left:63.1px;top:282.4px;width:150.9px"></div>
<svg id="bicons" width="330" height="310" viewBox="0 0 330 310" style="position:absolute;left:0;top:0">
<path d="M13.6,112.25L17.4,109.3V115.2Z M17.9,112.25L21.5,109.3V115.2Z" fill="#8c8c8c"/>
<path d="M300.0,111.8H309.0" stroke="#6a6a6a" stroke-width="2"/>
<path d="M25.6,139.0L29.5,143.3L33.5,139.0" fill="none" stroke="#333" stroke-width="1.5"/>
<path d="M46.2,162.9L50.7,166.5L46.2,170.0" fill="none" stroke="#4a4a4a" stroke-width="1.4"/>
<path d="M46.2,188.1L50.7,191.7L46.2,195.2" fill="none" stroke="#4a4a4a" stroke-width="1.4"/>
<path d="M46.2,213.1L50.7,216.7L46.2,220.2" fill="none" stroke="#4a4a4a" stroke-width="1.4"/>
<path d="M46.2,238.4L50.7,242.0L46.2,245.5" fill="none" stroke="#4a4a4a" stroke-width="1.4"/>
<path d="M46.2,263.7L50.7,267.3L46.2,270.8" fill="none" stroke="#4a4a4a" stroke-width="1.4"/>
<path d="M46.2,288.9L50.7,292.5L46.2,296.0" fill="none" stroke="#4a4a4a" stroke-width="1.4"/>
<path d="M47.5,141.0Q56.0,130.4 64.5,141.0Q56.0,151.6 47.5,141.0Z" fill="#6c6c6c"/><circle cx="56.0" cy="141.0" r="3.0" fill="#6c6c6c" stroke="#f2f2f2" stroke-width="1.5"/>
<path d="M67.0,216.7Q74.9,207.9 82.8,216.7Q74.9,225.5 67.0,216.7Z" fill="none" stroke="#8c8c8c" stroke-width="1.1"/><circle cx="74.9" cy="216.7" r="2.6" fill="none" stroke="#8c8c8c" stroke-width="1.1"/><path d="M69.0,211.3L81.2,222.3" stroke="#7a7a7a" stroke-width="1.2"/>
<path d="M66.3,242.2Q74.8,231.6 83.3,242.2Q74.8,252.8 66.3,242.2Z" fill="#6c6c6c"/><circle cx="74.8" cy="242.2" r="3.0" fill="#6c6c6c" stroke="#f2f2f2" stroke-width="1.5"/>
<path d="M66.3,267.5Q74.8,256.9 83.3,267.5Q74.8,278.1 66.3,267.5Z" fill="#6c6c6c"/><circle cx="74.8" cy="267.5" r="3.0" fill="#6c6c6c" stroke="#f2f2f2" stroke-width="1.5"/>
<path d="M66.3,292.7Q74.8,282.1 83.3,292.7Q74.8,303.3 66.3,292.7Z" fill="#6c6c6c"/><circle cx="74.8" cy="292.7" r="3.0" fill="#6c6c6c" stroke="#f2f2f2" stroke-width="1.5"/>
<path d="M66.4,184.7H70.7L72.4,187.7H66.4Z" fill="#b4b4b4"/><path d="M66.7,185.2V197.7H81.3V187.9H72.7L71.0,185.2H66.7Z" fill="none" stroke="#777" stroke-width="1.2" stroke-linejoin="round"/>
<path d="M93.5,209.3H97.8L99.5,212.3H93.5Z" fill="#b4b4b4"/><path d="M93.8,209.8V222.3H108.4V212.5H99.8L98.1,209.8H93.8Z" fill="none" stroke="#777" stroke-width="1.2" stroke-linejoin="round"/>
<path d="M93.5,234.6H97.8L99.5,237.6H93.5Z" fill="#b4b4b4"/><path d="M93.8,235.1V247.6H108.4V237.8H99.8L98.1,235.1H93.8Z" fill="none" stroke="#777" stroke-width="1.2" stroke-linejoin="round"/>
<path d="M93.5,259.9H97.8L99.5,262.9H93.5Z" fill="#b4b4b4"/><path d="M93.8,260.4V272.9H108.4V263.1H99.8L98.1,260.4H93.8Z" fill="none" stroke="#777" stroke-width="1.2" stroke-linejoin="round"/>
<path d="M93.5,285.1H97.8L99.5,288.1H93.5Z" fill="#b4b4b4"/><path d="M93.8,285.6V298.1H108.4V288.3H99.8L98.1,285.6H93.8Z" fill="none" stroke="#777" stroke-width="1.2" stroke-linejoin="round"/>
<path d="M75.3,138.3L78.9,134.5H88.4Q89.6,134.5 89.6,135.7V144.4L86.0,147.9H76.4Q75.3,147.9 75.3,146.8Z" fill="#dedede" stroke="#6c6c6c" stroke-width="1.1" stroke-linejoin="round"/>
<path d="M85.6,138.2L89.2,134.9V144.3L85.6,147.5Z" fill="#bcbcbc"/>
<rect x="75.9" y="138.2" width="9.6" height="9.2" rx="1.2" fill="#e8e8e8"/>
<path d="M75.8,138.1H85.5L89.0,134.9 M85.5,138.1V147.4" fill="none" stroke="#9a9a9a" stroke-width="0.7"/>
<defs><linearGradient id="rg" x1="0" y1="0" x2="0" y2="1"><stop offset="0" stop-color="#a3acbd"/><stop offset="0.55" stop-color="#e4e7ec"/><stop offset="1" stop-color="#ffffff"/></linearGradient></defs>
<circle cx="185.4" cy="140.7" r="6.8" fill="url(#rg)" stroke="#b4b4b4" stroke-width="0.9"/>
<circle cx="185.4" cy="140.7" r="2.7" fill="#454545"/>
<path d="M80.41,164.57 L82.92,164.65 L82.92,168.15 L80.41,168.23 L80.03,169.15 L81.75,170.97 L79.27,173.45 L77.45,171.73 L76.53,172.11 L76.45,174.62 L72.95,174.62 L72.87,172.11 L71.95,171.73 L70.13,173.45 L67.65,170.97 L69.37,169.15 L68.99,168.23 L66.48,168.15 L66.48,164.65 L68.99,164.57 L69.37,163.65 L67.65,161.83 L70.13,159.35 L71.95,161.07 L72.87,160.69 L72.95,158.18 L76.45,158.18 L76.53,160.69 L77.45,161.07 L79.27,159.35 L81.75,161.83 L80.03,163.65Z M74.70,163.30 a3.1,3.1 0 1,0 0.01,0Z" fill="#7a7a7a" fill-rule="evenodd"/>
</svg>
<svg id="icons" width="1600" height="95" viewBox="0 0 1600 95" style="position:absolute;left:0;top:0">
<rect x="14.8" y="16.7" width="114.2" height="63.2" rx="4.6" fill="#f6f6f6" stroke="#c0c0c0" stroke-width="1"/>
<!-- CREATE: sketch + extrude -->
<g transform="translate(140,28) scale(0.0625)">
  <rect x="105" y="95" width="505" height="500" fill="#fff"/>
  <g stroke="#5a5a5a" stroke-width="20" fill="none">
    <path d="M180,120H540 M130,165V525 M585,165V395 M180,570H405"/>
    <path d="M290,232H425 M245,277V415"/>
    <path d="M470,280C440,380 370,440 290,462" stroke-width="18"/>
  </g>
  <g fill="#555">
    <rect x="103" y="95" width="54" height="50"/><rect x="558" y="95" width="54" height="50"/><rect x="103" y="545" width="54" height="50"/>
    <rect x="220" y="208" width="50" height="48"/><rect x="445" y="208" width="50" height="48"/><rect x="220" y="433" width="50" height="48"/>
  </g>
  <path d="M498,400H555V485H640V545H555V628H498V545H405V485H498Z" fill="#0cb14a"/>
  <!-- extrude -->
  <path d="M850,195L945,100H1245L1150,195Z" fill="#78cfff"/>
  <path d="M1150,195L1245,100V440L1150,540Z" fill="#1b96d5"/>
  <rect x="850" y="195" width="300" height="345" fill="#4ab3ea"/>
  <rect x="850" y="560" width="300" height="62" fill="#b4b4b4"/>
  <path d="M1150,560L1245,465V522L1150,622Z" fill="#a2a2a2"/>
  <path d="M1305,180V525" stroke="#333" stroke-width="24"/>
  <path d="M1305,112L1262,182H1348Z" fill="#333"/>
</g>
<!-- revolve + hole -->
<g transform="translate(230,28) scale(0.0625)">
  <path d="M612,215C520,95 280,95 170,195" fill="none" stroke="#333" stroke-width="18"/>
  <path d="M122,222L162,150L212,212Z" fill="#333"/>
  <path d="M115,320C270,170 500,170 650,300L545,400C440,325 320,325 215,410Z" fill="#78cfff"/>
  <path d="M215,410C320,325 440,325 545,400V555C440,480 320,485 215,575Z" fill="#4ab3ea"/>
  <path d="M115,320L215,410V575L115,475Z" fill="#1b96d5"/>
  <path d="M555,410L650,322V465L555,555Z" fill="#fff" stroke="#444" stroke-width="18" stroke-linejoin="round"/>
  <!-- hole box -->
  <path d="M845,225L970,100H1370L1250,225Z" fill="#f0f0f0"/>
  <path d="M1250,225L1370,100V490L1250,615Z" fill="#bdbdbd"/>
  <rect x="845" y="225" width="405" height="390" fill="#dadada"/>
  <path d="M845,225L970,100H1370V490L1250,615H845Z" fill="none" stroke="#808080" stroke-width="18" stroke-linejoin="round"/>
  <circle cx="1045" cy="425" r="140" fill="#fff" stroke="#555" stroke-width="16"/>
  <path d="M1015,318C1040,400 1090,440 1155,460C1140,520 1090,545 1045,545C980,545 930,495 930,425C930,370 965,330 1015,318Z" fill="#4ab3ea"/>
</g>
<!-- pattern + form -->
<g transform="translate(320,28) scale(0.0625)">
  <g stroke="#555" stroke-width="20" fill="none"><path d="M260,183H460 M183,260V460 M260,535H460"/></g>
  <rect x="138" y="138" width="94" height="94" fill="#fff" stroke="#555" stroke-width="18"/>
  <rect x="482" y="130" width="110" height="110" fill="#4ab3ea"/>
  <rect x="130" y="482" width="110" height="110" fill="#4ab3ea"/>
  <rect x="482" y="482" width="110" height="110" fill="#4ab3ea"/>
  <!-- form -->
  <path d="M860,230C860,200 960,100 1000,100H1240C1300,100 1325,150 1325,200V400C1325,440 1240,550 1190,550H930C880,550 855,520 855,470Z" fill="#c9a0f2" stroke="#7d5ca8" stroke-width="12"/>
  <path d="M870,250C940,215 1140,215 1200,240C1230,180 1290,140 1315,150C1300,110 1270,105 1240,105H1000C960,105 880,200 870,250Z" fill="#e9d4ff"/>
  <path d="M1215,250C1240,190 1290,150 1318,160V400C1318,420 1260,500 1215,540Z" fill="#8a5fc0"/>
  <rect x="880" y="230" width="310" height="300" rx="70" fill="#b07eea"/>
  <path d="M1035,225V545 M865,390C960,410 1100,410 1195,385 M1040,215C1060,170 1110,120 1150,105" stroke="#7d5ca8" stroke-width="10" fill="none"/>
  <path d="M1220,365H1290V460H1390V528H1290V625H1220V528H1120V460H1220Z" fill="#0cb14a"/>
</g>
<!-- press pull + fillet -->
<g transform="translate(420,28) scale(0.0625)">
  <path d="M185,200L277,108H370L300,200Z" fill="#f4f4f4"/>
  <rect x="185" y="200" width="95" height="412" fill="#dadada"/>
  <path d="M275,615H180V195L275,100H365" fill="none" stroke="#444" stroke-width="20" stroke-linejoin="round"/>
  <path d="M300,195L395,100H540L450,195Z" fill="#78cfff"/>
  <path d="M450,195L540,100V530L450,620Z" fill="#1b96d5"/>
  <rect x="300" y="195" width="150" height="425" fill="#4ab3ea"/>
  <rect x="498" y="325" width="60" height="52" fill="#f5f5f5"/>
  <path d="M515,351H610" stroke="#555" stroke-width="26"/>
  <path d="M593,311L668,351L593,392Z" fill="#333"/>
  <!-- fillet -->
  <path d="M890,222L1012,106H1185L1090,205Z" fill="#f4f4f4"/>
  <path d="M890,225H1100C1210,225 1295,320 1295,440V615H890Z" fill="#d9d9d9"/>
  <path d="M1295,465L1415,350V495L1295,615Z" fill="#bdbdbd"/>
  <path d="M1090,200L1190,100C1310,110 1400,200 1420,320L1315,430C1300,300 1220,210 1090,200Z" fill="#4ab3ea"/>
  <path d="M1160,100H1010L885,225V615H1295L1415,495V350" fill="none" stroke="#555" stroke-width="18" stroke-linejoin="round"/>
</g>
<!-- shell + combine -->
<g transform="translate(510,28) scale(0.0625)">
  <path d="M185,220L300,105H700L585,225Z" fill="#f3f3f3"/>
  <path d="M585,225L700,105V495L585,615Z" fill="#bdbdbd"/>
  <rect x="185" y="225" width="400" height="390" fill="#dcdcdc"/>
  <rect x="235" y="283" width="282" height="280" fill="#fafafa"/>
  <path d="M245,290H365V435L245,552Z" fill="#1b96d5"/>
  <path d="M245,555L365,435H510V555Z" fill="#78cfff"/>
  <path d="M180,215L300,100H705V495L585,615H180Z" fill="none" stroke="#555" stroke-width="20" stroke-linejoin="round"/>
  <!-- combine -->
  <path d="M1075,160L1135,100H1435L1375,160Z" fill="#78cfff"/>
  <path d="M1375,160L1435,100V395L1375,455Z" fill="#1b96d5"/>
  <rect x="1075" y="160" width="300" height="295" fill="#4ab3ea"/>
  <path d="M900,325L965,260H1078V325Z" fill="#78cfff"/>
  <path d="M1205,455H1262V565L1205,620Z" fill="#1b96d5"/>
  <rect x="900" y="325" width="305" height="295" fill="#4ab3ea"/>
</g>
<!-- split + move -->
<g transform="translate(600,28) scale(0.0625)">
  <path d="M215,200L315,100H685L590,200Z" fill="#78cfff"/>
  <path d="M590,200L685,100V260L590,360Z" fill="#1b96d5"/>
  <rect x="215" y="200" width="375" height="160" fill="#4ab3ea"/>
  <path d="M595,450L685,365V515L595,600Z" fill="#b8b8b8"/>
  <rect x="215" y="450" width="380" height="150" fill="#d9d9d9"/>
  <path d="M225,450V600H595L685,515V370" fill="none" stroke="#777" stroke-width="20" stroke-linejoin="round"/>
  <path d="M180,405H590L715,275" fill="none" stroke="#fff" stroke-width="62" stroke-linecap="round" stroke-linejoin="round"/>
  <path d="M180,405H590L715,275" fill="none" stroke="#0b92ec" stroke-width="20" stroke-linecap="round" stroke-linejoin="round"/>
  <!-- move -->
  <path d="M1175,200V510 M1030,355H1320" stroke="#333" stroke-width="40"/>
  <path d="M1175,88L1098,218H1252Z M1175,627L1098,495H1252Z M908,355L1042,278V435Z M1442,355L1308,278V435Z" fill="#333"/>
</g>
<!-- configure -->
<g transform="translate(705,28) scale(0.0625)">
  <path d="M195,205L305,92H645L545,205Z" fill="#f1f1f1"/>
  <path d="M195,205L305,95" stroke="#d0d0d0" stroke-width="10"/>
  <rect x="195" y="205" width="350" height="350" fill="#e9e9e9"/>
  <path d="M545,205L655,95V440L545,555Z" fill="#dcdcdc"/>
  <rect x="480" y="420" width="260" height="215" fill="#f5f5f5"/>
  <circle cx="595" cy="225" r="132" fill="#0b8ee6"/>
  <path d="M600,135L670,215L630,212C640,260 610,305 555,322C585,290 590,250 580,212L540,215Z" fill="#fff"/>
  <path d="M500,480H725 M500,577H725" stroke="#b2b2b2" stroke-width="32"/>
  <path d="M560,435V525" stroke="#8ccaf2" stroke-width="34"/>
  <path d="M655,530V625" stroke="#b2b2b2" stroke-width="34"/>
  <!-- table -->
  <rect x="918" y="103" width="500" height="470" fill="#f5f5f5" stroke="#b5b5b5" stroke-width="16"/>
  <rect x="915" y="98" width="505" height="88" fill="#bdbdbd"/>
  <rect x="945" y="130" width="62" height="26" fill="#fff"/>
  <path d="M965,245H1420 M965,335H1420 M965,420H1420 M965,505H1420 M965,245V505 M1055,245V505 M1145,245V505 M1370,245V505 M1410,245V505" stroke="#b2b2b2" stroke-width="18" fill="none"/>
  <rect x="1200" y="435" width="270" height="200" fill="#f5f5f5"/>
  <circle cx="1320" cy="225" r="132" fill="#0b8ee6"/>
  <path d="M1325,135L1395,215L1355,212C1365,260 1335,305 1280,322C1310,290 1315,250 1305,212L1265,215Z" fill="#fff"/>
  <path d="M1220,480H1452 M1220,577H1452" stroke="#b2b2b2" stroke-width="32"/>
  <path d="M1280,435V525" stroke="#8ccaf2" stroke-width="34"/>
  <path d="M1385,530V625" stroke="#b2b2b2" stroke-width="34"/>
</g>
<!-- construct -->
<g transform="translate(830,28) scale(0.0625)">
  <path d="M345,243L482,108H600L465,243Z" fill="#fafafa"/>
  <rect x="345" y="243" width="118" height="355" fill="#d9d9d9"/>
  <path d="M460,600H340V240L480,100H595" fill="none" stroke="#707070" stroke-width="17" stroke-linejoin="round"/>
  <path d="M482,245L635,100V455L482,605Z" fill="#00c878" stroke="#1ab873" stroke-width="8"/>
  <path d="M690,240L828,105V465L690,600Z" fill="#f39c5e" stroke="#d9823f" stroke-width="10"/>
</g>
<!-- inspect -->
<g transform="translate(925,28) scale(0.0625)">
  <rect x="160" y="400" width="470" height="95" fill="#ffa000"/>
  <rect x="160" y="478" width="470" height="17" fill="#f08c00"/>
  <path d="M185,400V425 M235,400V445 M285,400V425 M335,400V445 M385,400V425 M440,400V445 M490,400V425 M540,400V445 M590,400V425" stroke="#5a4a2a" stroke-width="14"/>
  <path d="M168,225V380 M620,225V380" stroke="#666" stroke-width="18"/>
  <path d="M225,300H565" stroke="#666" stroke-width="20"/>
  <path d="M185,300L245,262V338Z M603,300L543,262V338Z" fill="#666"/>
  <!-- section -->
  <rect x="935" y="165" width="190" height="375" fill="#aed8f2" stroke="#1ea0f0" stroke-width="22"/>
  <path d="M935,350H1125" stroke="#1ea0f0" stroke-width="26"/>
  <path d="M1128,115V590" stroke="#0b92ec" stroke-width="20"/>
  <path d="M1150,165H1335V540H1150" fill="none" stroke="#999" stroke-width="20"/>
  <path d="M1150,350H1325" stroke="#c2c2c2" stroke-width="26"/>
  <path d="M1005,120H888V222 M888,483V585H1005" fill="none" stroke="#0b92ec" stroke-width="20"/>
</g>
<!-- insert -->
<g transform="translate(1025,28) scale(0.09375)">
  <path d="M178,186L250,100H455L385,186Z" fill="#fdfdfd"/>
  <path d="M385,188L455,100V320L385,388Z" fill="#c6c9d1"/>
  <rect x="178" y="188" width="207" height="200" fill="#e0e3e8"/>
  <path d="M175,185L250,98H455V320L385,390H175Z" fill="none" stroke="#3a3d44" stroke-width="9" stroke-linejoin="round"/>
  <path d="M128,328C150,285 180,275 215,275V232L292,283L215,338V300C180,298 155,305 128,328Z" fill="#3a3d44"/>
  <!-- image -->
  <rect x="603" y="78" width="322" height="312" fill="#6ccbff" stroke="#0a96d8" stroke-width="8"/>
  <path d="M608,285C640,240 670,208 695,208C740,208 770,300 810,322C830,300 845,280 862,280C885,280 905,310 921,330V386H608Z" fill="#0093d0"/>
  <circle cx="838" cy="160" r="38" fill="#ffffc8" stroke="#9fdcf5" stroke-width="5"/>
  <!-- mesh -->
</g>
<g transform="translate(1120,30) scale(0.04926)">
  <path d="M205,295L330,375L530,185H670L795,300V610L680,745H330L205,610Z" fill="#e3c05c"/>
  <path d="M330,375L530,185H670V400H330Z" fill="#c9a640"/>
  <path d="M205,295L330,375V745L205,610Z" fill="#f3d168"/>
  <path d="M665,185L795,300V610L680,745H665Z" fill="#d9b44b"/>
  <path d="M665,185L795,300L665,400Z" fill="#f2cf66"/>
  <path d="M665,420L795,440V470L665,560Z" fill="#c9a640"/>
  <path d="M330,375V745 M665,185V745 M330,400H665 M205,590L330,575H665L795,610 M330,560L665,420 M330,745L665,580 M450,270L665,400 M205,440L330,400 M205,480L330,580 M205,610L330,560 M665,400L795,300 M665,420L795,440 M665,560L795,470" fill="none" stroke="#b08b2f" stroke-width="12"/>
  <path d="M205,295L330,375L530,185H670L795,300V610L680,745H330L205,610Z" fill="none" stroke="#b8933a" stroke-width="12" stroke-linejoin="round"/>
  <path d="M100,150H270V50L530,200L270,360V255H100Z" fill="#f5f5f5"/>
  <path d="M120,165H288V80L490,200L288,325V240H120Z" fill="#0a93ec"/>
</g>
<!-- assemble + select -->
<g transform="translate(1190,28) scale(0.1)">
  <path d="M162,95L185,65H285L262,95Z" fill="#f0f0f0"/>
  <path d="M262,95L285,65V150L262,175Z" fill="#c0c0c0"/>
  <rect x="162" y="95" width="100" height="80" fill="#dadada"/>
  <path d="M162,95L185,65H285V150L262,175H162Z" fill="none" stroke="#666" stroke-width="7" stroke-linejoin="round"/>
  <path d="M295,95H358V145" fill="none" stroke="#333" stroke-width="9"/>
  <path d="M335,138H381L358,170Z" fill="#333"/>
  <path d="M288,215L315,185H398L375,215Z" fill="#78cfff"/>
  <path d="M375,215L398,185V270L375,297Z" fill="#1b96d5"/>
  <rect x="288" y="215" width="87" height="82" fill="#4ab3ea"/>
  <path d="M380,300L402,272H482L460,300Z" fill="#f0f0f0"/>
  <path d="M460,300L482,272V350L460,375Z" fill="#c0c0c0"/>
  <rect x="288" y="300" width="87" height="75" fill="#dadada"/>
  <rect x="380" y="300" width="80" height="75" fill="#dadada"/>
  <path d="M288,300V375H460L482,350V272H402L380,300 M378,300V375 M288,300H460V375 M460,300L482,272" fill="none" stroke="#707070" stroke-width="7" stroke-linejoin="round"/>
  <!-- select -->
  <rect x="1100" y="65" width="285" height="220" fill="none" stroke="#0cb14a" stroke-width="11" stroke-dasharray="44 24"/>
  <path d="M1325,215V345L1355,322L1382,385L1408,374L1382,313H1425Z" fill="#fff" stroke="#333" stroke-width="10" stroke-linejoin="round"/>
</g>
<path d="M97.1,46.3h5.8l-2.9,3.6z M294.0,78.1h5.8l-2.9,3.6z M579.8,78.1h5.8l-2.9,3.6z M789.8,78.1h5.8l-2.9,3.6z M900.4,78.1h5.8l-2.9,3.6z M995.0,78.1h5.8l-2.9,3.6z M1115.0,78.1h5.8l-2.9,3.6z M1253.5,78.1h5.8l-2.9,3.6z M1336.7,78.1h5.8l-2.9,3.6z" fill="#757575"/>
</svg>

<div id="labels">
<span class="t b" style="left:43.26px;top:41.54px;font-size:12px;line-height:12px;letter-spacing:0.397px">DESIGN</span>
<span class="t b" style="left:159.66px;top:10.94px;font-size:12px;line-height:12px;letter-spacing:0.332px">SOLID</span>
<span class="t " style="left:247.16px;top:10.94px;font-size:12px;line-height:12px;letter-spacing:-0.365px">SURFACE</span>
<span class="t " style="left:350.86px;top:10.94px;font-size:12px;line-height:12px;letter-spacing:0.309px">MESH</span>
<span class="t " style="left:432.46px;top:10.94px;font-size:12px;line-height:12px;letter-spacing:0.015px">SHEET METAL</span>
<span class="t " style="left:562.46px;top:10.94px;font-size:12px;line-height:12px;letter-spacing:-0.086px">PLASTIC</span>
<span class="t " style="left:660.36px;top:10.94px;font-size:12px;line-height:12px;letter-spacing:0.498px">UTILITIES</span>
<span class="t " style="left:246.66px;top:74.64px;font-size:12px;line-height:12px;letter-spacing:-0.639px">CREATE</span>
<span class="t " style="left:528.26px;top:74.64px;font-size:12px;line-height:12px;letter-spacing:0.206px">MODIFY</span>
<span class="t " style="left:715.46px;top:74.64px;font-size:12px;line-height:12px;letter-spacing:-0.125px">CONFIGURE</span>
<span class="t " style="left:825.36px;top:74.64px;font-size:12px;line-height:12px;letter-spacing:-0.366px">CONSTRUCT</span>
<span class="t " style="left:939.56px;top:74.64px;font-size:12px;line-height:12px;letter-spacing:-0.019px">INSPECT</span>
<span class="t " style="left:1066.86px;top:74.64px;font-size:12px;line-height:12px;letter-spacing:0.201px">INSERT</span>
<span class="t " style="left:1185.76px;top:74.64px;font-size:12px;line-height:12px;letter-spacing:-0.029px">ASSEMBLE</span>
<span class="t " style="left:1289.36px;top:74.64px;font-size:12px;line-height:12px;letter-spacing:-0.637px">SELECT</span>
<span class="t " style="left:35.96px;top:106.64px;font-size:12px;line-height:12px;letter-spacing:-0.386px">BROWSER</span>
<span class="t b" style="left:105.06px;top:135.04px;font-size:12px;line-height:12px;letter-spacing:0.018px">COnsole 3</span>
<span class="t " style="left:98.33px;top:160.62px;font-size:12.5px;line-height:12.5px;letter-spacing:0.503px">Document Settings</span>
<span class="t " style="left:98.33px;top:185.92px;font-size:12.5px;line-height:12.5px;letter-spacing:0.327px">Named Views</span>
<span class="t " style="left:124.12px;top:210.72px;font-size:12.5px;line-height:12.5px;letter-spacing:0.644px">Origin</span>
<span class="t " style="left:124.12px;top:236.32px;font-size:12.5px;line-height:12.5px;letter-spacing:0.506px">Bodies</span>
<span class="t " style="left:124.12px;top:261.72px;font-size:12.5px;line-height:12.5px;letter-spacing:0.363px">Sketches</span>
<span class="t " style="left:124.12px;top:287.12px;font-size:12.5px;line-height:12.5px;letter-spacing:0.616px">Construction</span>
</div>
</body></html>
